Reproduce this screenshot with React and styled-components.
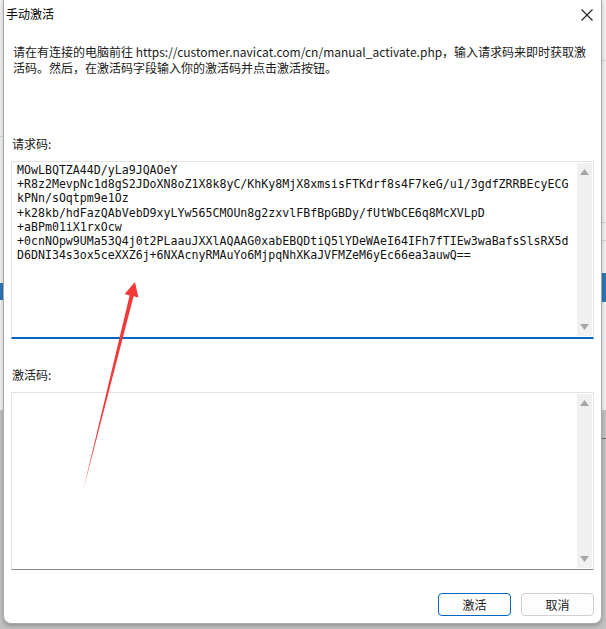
import React from "react";
import styled, { createGlobalStyle } from "styled-components";

const GlobalStyle = createGlobalStyle`
  html, body {
    margin: 0;
    padding: 0;
    background: #c4c4c4;
  }
  body {
    font-family: "Noto Sans CJK SC", "Noto Sans", sans-serif;
    color: #1b1b1b;
  }
`;

const requestLines = [
  "MOwLBQTZA44D/yLa9JQAOeY",
  "+R8z2MevpNc1d8gS2JDoXN8oZ1X8k8yC/KhKy8MjX8xmsisFTKdrf8s4F7keG/u1/3gdfZRRBEcyECG",
  "kPNn/sOqtpm9e1Oz",
  "+k28kb/hdFazQAbVebD9xyLYw565CMOUn8g2zxvlFBfBpGBDy/fUtWbCE6q8McXVLpD",
  "+aBPm01iX1rxOcw",
  "+0cnNOpw9UMa53Q4j0t2PLaauJXXlAQAAG0xabEBQDtiQ5lYDeWAeI64IFh7fTIEw3waBafsSlsRX5d",
  "D6DNI34s3ox5ceXXZ6j+6NXAcnyRMAuYo6MjpqNhXKaJVFMZeM6yEc66ea3auwQ==",
];

function Scrollbar() {
  return (
    <Track>
      <svg width="9" height="6" viewBox="0 0 9 6">
        <path d="M4.5 0 L9 6 L0 6 Z" fill="#a6a6a6" />
      </svg>
      <svg width="9" height="6" viewBox="0 0 9 6">
        <path d="M0 0 L9 0 L4.5 6 Z" fill="#a6a6a6" />
      </svg>
    </Track>
  );
}

export default function App() {
  return (
    <Screen>
      <GlobalStyle />
      <Dialog>
        <TitleBar>
          <Title>手动激活</Title>
          <Close>
            <svg width="12" height="12" viewBox="0 0 12 12">
              <path d="M0.5 0.5 L11.5 11.5 M11.5 0.5 L0.5 11.5" stroke="#222" strokeWidth="1.1" fill="none" />
            </svg>
          </Close>
        </TitleBar>

        <Body>
          <Description>
            <div>请在有连接的电脑前往 https://customer.navicat.com/cn/manual_activate.php，输入请求码来即时获取激</div>
            <div>活码。然后，在激活码字段输入你的激活码并点击激活按钮。</div>
          </Description>

          <Label $top={60}>请求码:</Label>
          <TextBox $focused>
            <Code>
              {requestLines.map((l, i) => (
                <div key={i}>{l}</div>
              ))}
            </Code>
            <Scrollbar />
          </TextBox>

          <Label $top={28}>激活码:</Label>
          <TextBox>
            <Code />
            <Scrollbar />
          </TextBox>

          <Footer>
            <Button $primary>激活</Button>
            <Button>取消</Button>
          </Footer>
        </Body>
      </Dialog>

      <Arrow width="606" height="629" viewBox="0 0 606 629">
        <path
          d="M83 491 L129.6 295.4 L124.6 294.1 L135 282 L138.4 297.4 L133.6 296.2 Z"
          fill="#f33a3a"
        />
      </Arrow>
    </Screen>
  );
}

// the app window behind the dialog only shows as thin strips on both sides
const Screen = styled.div`
  position: relative;
  width: 606px;
  height: 629px;
  overflow: hidden;
  background:
    linear-gradient(#2b78b8, #2b78b8) 0 283px / 3px 17px no-repeat,
    linear-gradient(#2b78b8, #2b78b8) 601px 273px / 5px 29px no-repeat,
    linear-gradient(#d6d6d6, #d6d6d6) 0 136px / 3px 1px no-repeat,
    linear-gradient(#d6d6d6, #d6d6d6) 601px 60px / 5px 1px no-repeat,
    linear-gradient(#d6d6d6, #d6d6d6) 601px 222px / 5px 1px no-repeat,
    linear-gradient(#d6d6d6, #d6d6d6) 601px 240px / 5px 1px no-repeat,
    linear-gradient(#6f6f6f, #6f6f6f) 601px 438px / 5px 1px no-repeat,
    linear-gradient(to bottom, #f2f2f2 0 410px, #c2c2c2 410px);
`;

const Dialog = styled.div`
  box-sizing: border-box;
  margin-left: 3px;
  width: 599px;
  height: 624px;
  background: #ffffff;
  border: 1px solid #a9a9a9;
  border-top: none;
  border-radius: 0 0 8px 8px;
  box-shadow: 0 2px 4px rgba(0, 0, 0, 0.25);
  display: flex;
  flex-direction: column;
`;

const TitleBar = styled.div`
  height: 27px;
  display: flex;
  align-items: center;
  justify-content: space-between;
  padding: 0 8px 0 2px;
`;

const Title = styled.span`
  font-size: 12px;
  line-height: 16px;
  color: #000;
`;

const Close = styled.div`
  width: 12px;
  height: 12px;
  display: flex;
  margin-top: 2px;
`;

const Body = styled.div`
  flex: 1;
  display: flex;
  flex-direction: column;
  padding: 0 7px 0 7px;
`;

const Description = styled.div`
  margin-top: 17px;
  padding-left: 2px;
  font-size: 12px;
  line-height: 16px;
  white-space: nowrap;
  color: #1a1a1a;
`;

const Label = styled.div`
  margin-top: ${(p) => p.$top}px;
  padding-left: 1px;
  font-size: 12px;
  line-height: 16px;
  height: 16px;
  color: #1a1a1a;
  margin-bottom: 9px;
`;

const TextBox = styled.div`
  box-sizing: border-box;
  height: 178px;
  display: flex;
  border: 1px solid #e3e3e3;
  border-bottom: ${(p) => (p.$focused ? "2px solid #0067c0" : "1px solid #8a8a8a")};
  background: #fff;
`;

const Code = styled.div`
  flex: 1;
  padding: 1px 0 0 5px;
  font-family: "DejaVu Sans Mono", "Liberation Mono", monospace;
  font-size: 11.6px;
  line-height: 14.2px;
  color: #111;
  white-space: pre;
  overflow: hidden;
`;

const Track = styled.div`
  width: 15px;
  margin: 1px;
  background: #f0f0f0;
  display: flex;
  flex-direction: column;
  align-items: center;
  justify-content: space-between;
  padding: 6px 0;
`;

const Footer = styled.div`
  margin-top: 23px;
  display: flex;
  justify-content: flex-end;
  gap: 10px;
`;

const Button = styled.button`
  box-sizing: border-box;
  width: 73px;
  height: 23px;
  padding: 0;
  background: #fdfdfd;
  border: 1px solid ${(p) => (p.$primary ? "#0067c0" : "#d0d0d0")};
  border-radius: 4px;
  font-family: "Noto Sans CJK SC", sans-serif;
  font-size: 12px;
  color: #1b1b1b;
`;

const Arrow = styled.svg`
  position: absolute;
  top: 0;
  left: 0;
  pointer-events: none;
`;
